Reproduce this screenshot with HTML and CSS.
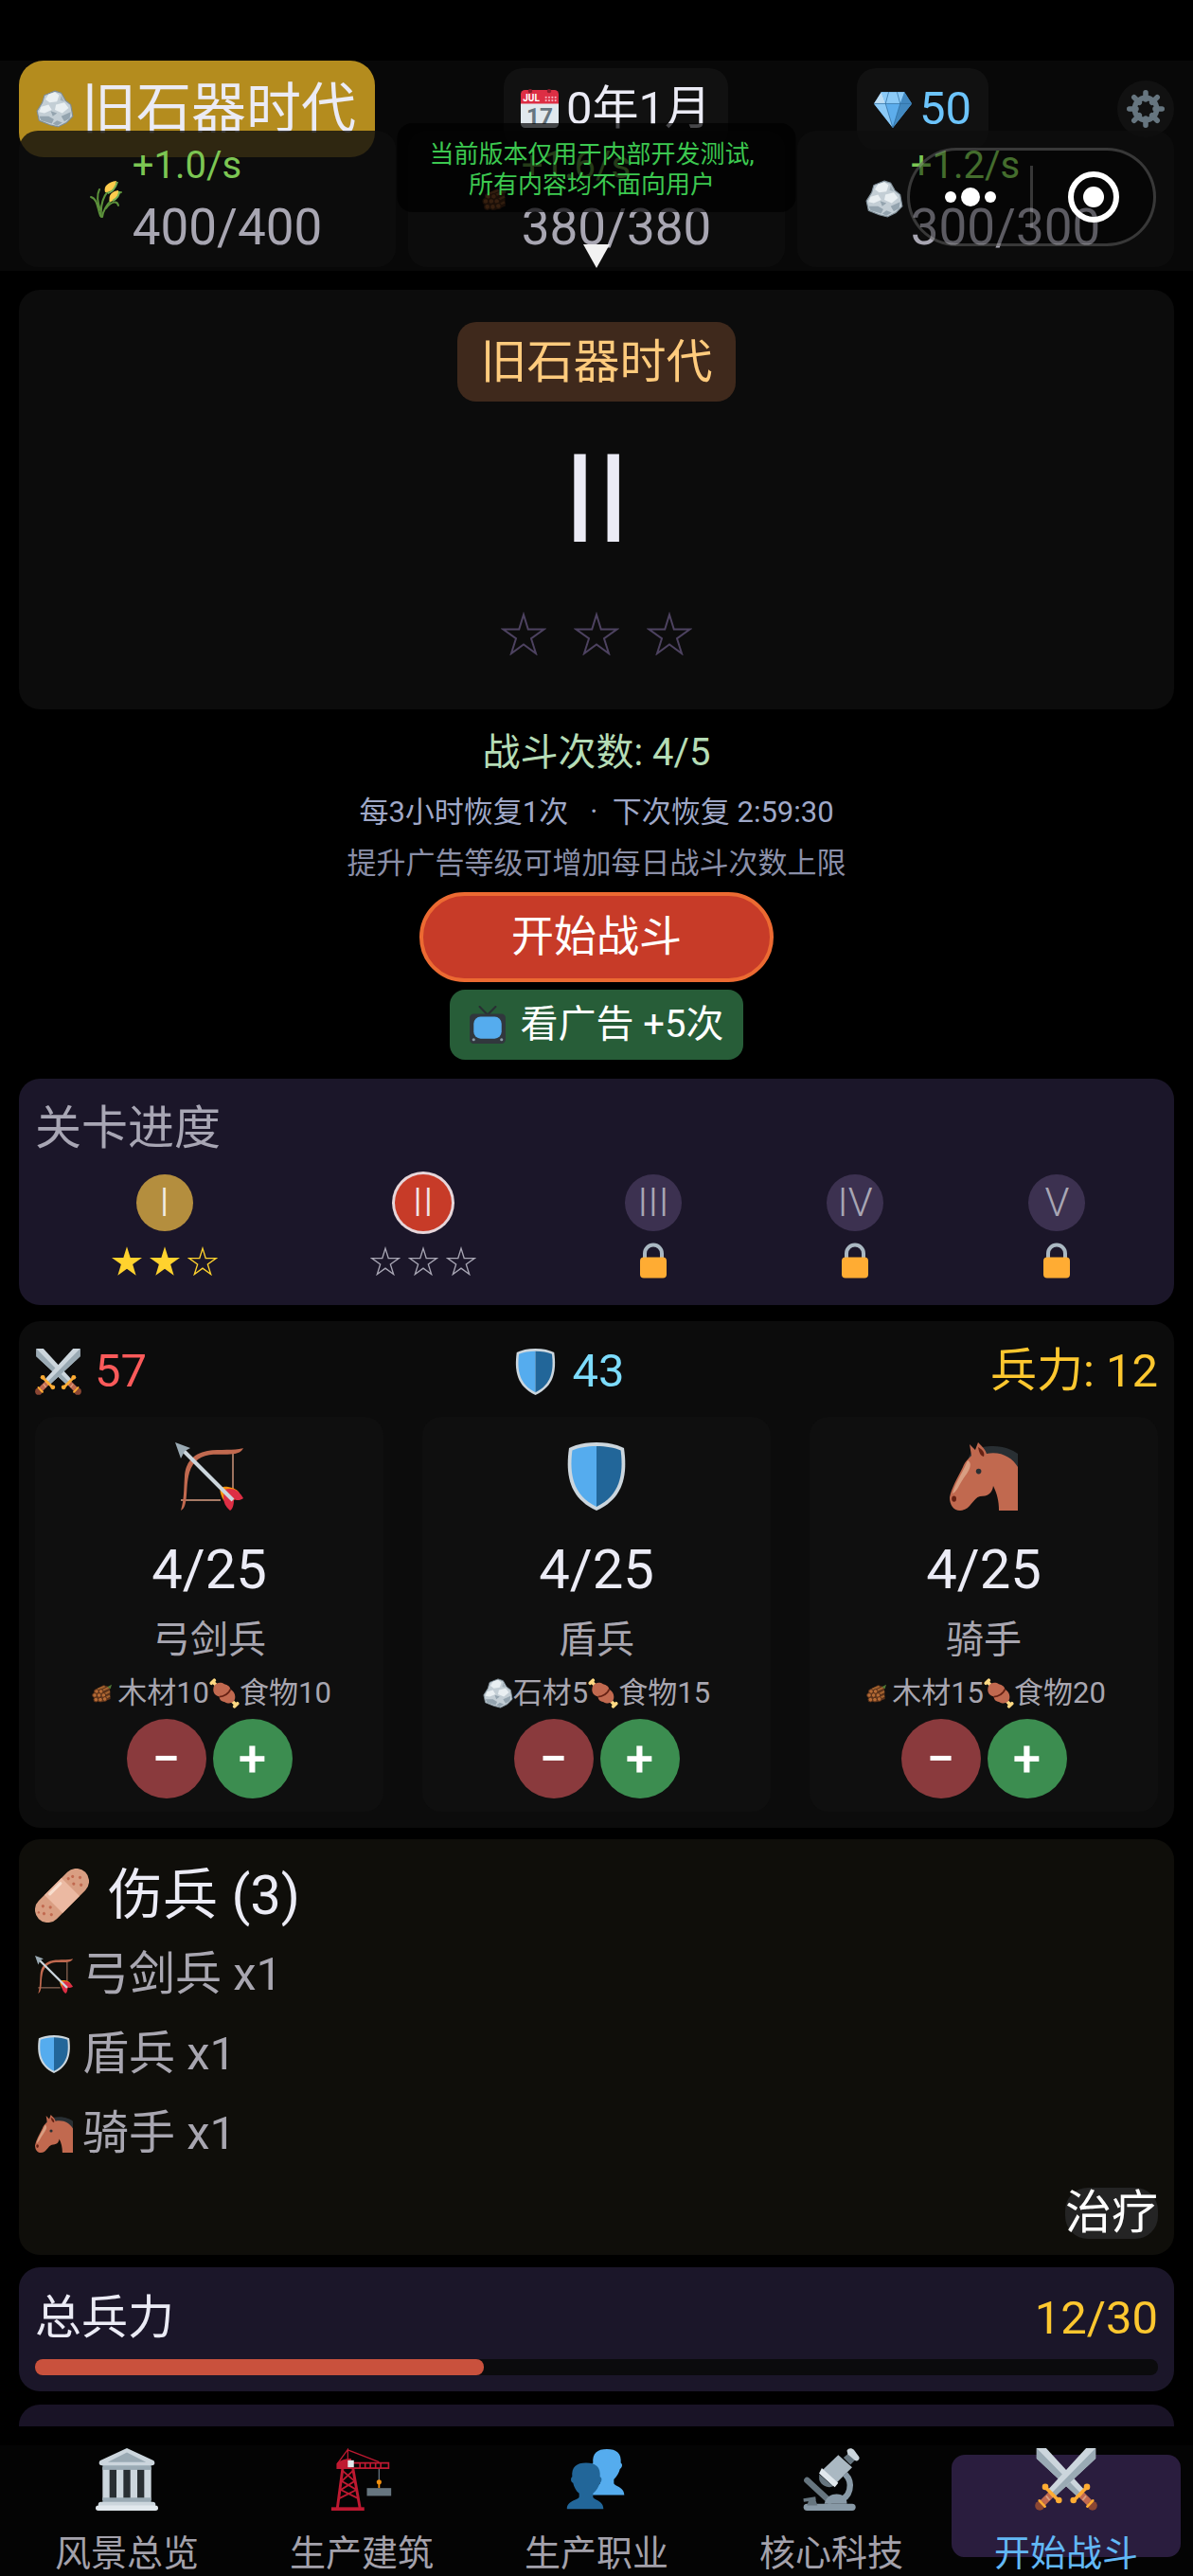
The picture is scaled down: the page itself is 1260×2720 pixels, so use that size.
FILE: index.html
```
<!DOCTYPE html>
<html lang="zh-CN">
<head>
    <meta charset="UTF-8">
    <meta name="viewport" content="width=device-width, initial-scale=1.0">
    <title>开始战斗</title>
    <link rel="stylesheet" href="styles.css">
</head>
<body>
    <!-- Icon set -->
    <svg class="sprite" aria-hidden="true">
        <symbol id="star-line" viewBox="0 0 48 46">
            <path d="M24 3 L28.8 18.6 H45.5 L32 28.2 L37 44 L24 34.4 L11 44 L16 28.2 L2.500 18.6 H19.2 Z" fill="none" stroke="currentColor" stroke-width="2"/>
        </symbol>
        <symbol id="star-full" viewBox="0 0 48 46">
            <path d="M24 0 L29.500 17.600 H48 L33.2 28.4 L38.500 46 L24 35.500 L9.500 46 L14.800 28.4 L0 17.600 H18.500 Z" fill="currentColor"/>
        </symbol>
        <symbol id="lock" viewBox="0 0 28 37">
            <path d="M5 17 V11 a9 9 0 0 1 18 0 V17" fill="none" stroke="#aab8c2" stroke-width="4"/>
            <rect x="0" y="15" width="28" height="22" rx="4" fill="#ffac33"/>
        </symbol>
        <symbol id="stone" viewBox="0 0 36 36">
            <path d="M18 1 L24 3 L28 10 L33 14 L35 25 L29 31 L21 35 L13 33 L3 29 L1 20 L6 12 L8 5 Z" fill="#c3ced5" stroke="#7e8d97" stroke-width="1"/>
            <path d="M12 4 L18 2 L22 5 L20 11 L13 12 L9 9 Z M5 16 L12 14 L15 19 L8 22 L3 21 Z M19 14 L27 12 L31 17 L25 22 L18 19 Z" fill="#e9eff2"/>
            <path d="M3 25 L12 25 L17 28 L15 32 L5 29 Z M24 25 L33 21 L32 27 L27 30 Z M20 29 L25 31 L20 34 L16 32 Z M14 20 L20 22 L16 25 Z" fill="#94a4af"/>
            <path d="M24 5 L27 11 L23 10 Z" fill="#a3b1ba"/>
        </symbol>
        <symbol id="diamond" viewBox="0 0 36 36">
            <path d="M7 2 H29 L36 13 L18 36 L0 13 Z" fill="#5dadec"/>
            <path d="M7 2 L11 13 H0 Z" fill="#bdddf4"/>
            <path d="M7 2 H14 L11 13 Z M29 2 H22 L25 13 Z" fill="#8ccaf7"/>
            <path d="M14 2 H22 L25 13 H11 Z" fill="#8ccaf7"/>
            <path d="M29 2 L36 13 H25 Z" fill="#4289c1"/>
            <path d="M0 13 H11 L18 36 Z" fill="#8ccaf7"/>
            <path d="M36 13 H25 L18 36 Z" fill="#4289c1"/>
            <path d="M0 13 H36 M14 2 L11 13 L18 36 L25 13 L22 2" fill="none" stroke="#2a6797" stroke-width="0.6"/>
        </symbol>
        <symbol id="gear" viewBox="0 0 36 36">
            <g stroke="#66757f" stroke-width="5" stroke-linecap="round">
                <path d="M18 2.500 V9 M18 27 V33.500 M2.500 18 H9 M27 18 H33.500 M7 7 L12 12 M24 24 L29 29 M29 7 L24 12 M12 24 L7 29"/>
            </g>
            <circle cx="18" cy="18" r="10.500" fill="none" stroke="#66757f" stroke-width="5"/>
        </symbol>
        <symbol id="wheat" viewBox="0 0 36 40">
            <g fill="none" stroke="#5c913b" stroke-width="2" stroke-linecap="round">
                <path d="M13 39 C12 28 14 19 20 12"/>
                <path d="M14 39 C15 32 18 27 24 21"/>
                <path d="M12 38 C9 30 9 20 2 18"/>
                <path d="M12 32 C9 24 8 16 11 10"/>
                <path d="M18 30 C24 22 30 22 31 27"/>
                <path d="M22 22 C26 15 30 14 34 13"/>
            </g>
            <path d="M17 13 C15 7 20 2 29 1 C28 8 25 13 17 13 Z" fill="#ffcc4d"/>
            <path d="M22 23 C20 16 24 12 31 11 C32 17 28 22 22 23 Z" fill="#ffcc4d"/>
            <path d="M20 14 C24 13 28 8 30 2 M25 22 C29 20 32 16 32 12" fill="none" stroke="#77b255" stroke-width="2"/>
        </symbol>
        <symbol id="wood" viewBox="0 0 36 36">
            <path d="M5 13 L20 5 L30 8 L31 27 L18 32 L6 30 Z" fill="#5b321a"/>
            <path d="M10 12 L22 7 M17 14 L28 9 M20 20 L30 15 M20 27 L30 22" stroke="#a2622f" stroke-width="3"/>
            <g fill="#b46a35" stroke="#5b321a" stroke-width="1.500">
                <circle cx="9" cy="15" r="3.500"/><circle cx="16" cy="15" r="3.500"/>
                <circle cx="6" cy="21" r="3.500"/><circle cx="13" cy="21" r="3.500"/><circle cx="20" cy="21" r="3.500"/>
                <circle cx="8" cy="28" r="3.500"/><circle cx="15" cy="28" r="3.500"/><circle cx="22" cy="27" r="3.500"/>
            </g>
            <path d="M26 8 L33 4 L31 11 Z" fill="#4f7a35"/>
        </symbol>
        <symbol id="tv" viewBox="0 0 36 38">
            <path d="M10 1 L18 9 L26 1" fill="none" stroke="#292f33" stroke-width="2" stroke-linecap="round"/>
            <rect x="0" y="8" width="36" height="30" rx="4" fill="#31373d"/>
            <rect x="4" y="11" width="28" height="22" rx="7" fill="#55acee"/>
            <circle cx="4" cy="34" r="1.500" fill="#8899a6"/>
            <circle cx="32" cy="34" r="1.500" fill="#8899a6"/>
        </symbol>
        <symbol id="sword" viewBox="0 0 36 36">
            <path d="M35 0 H29.500 L7.500 24 L11.500 28 L35 6 Z" fill="#ccd6dd"/>
            <path d="M35 0 L9.500 26 L11.500 28 L35 6 Z" fill="#9aaab4"/>
            <path d="M9.500 26.500 L3.500 32.500" stroke="#c1694f" stroke-width="4"/>
            <path d="M8.500 25.500 L10.500 28 M6.500 27.500 L8.500 30" stroke="#d99e82" stroke-width="1"/>
            <circle cx="2.800" cy="33.200" r="2.700" fill="#8a4633"/>
            <path d="M2.600 30.200 L5.800 33.600" stroke="#ffac33" stroke-width="1.500" stroke-linecap="round"/>
            <path d="M6 22.500 L13.500 30" stroke="#ffac33" stroke-width="2"/>
            <circle cx="6" cy="22.300" r="1.800" fill="#ffac33"/>
            <circle cx="13.800" cy="30" r="1.800" fill="#ffac33"/>
        </symbol>
        <symbol id="swords" viewBox="0 0 36 36">
            <use href="#sword" width="36" height="36" transform="matrix(-1 0 0 1 36 0)"/>
            <use href="#sword" width="36" height="36"/>
        </symbol>
        <symbol id="shield" viewBox="0 0 36 36">
            <path d="M18 0 C12 0 7 1.200 3.500 3 C1.500 17 3.500 29.500 18 36 C32.500 29.500 34.500 17 32.500 3 C29 1.200 24 0 18 0 Z" fill="#ccd6dd"/>
            <path d="M18 2 C13 2 8.500 2.800 5.200 4.300 C3.600 17 5.600 28 18 34 Z" fill="#55acee"/>
            <path d="M18 2 C23 2 27.500 2.800 30.800 4.300 C32.400 17 30.400 28 18 34 Z" fill="#269"/>
        </symbol>
        <symbol id="bow" viewBox="0 0 36 36">
            <path d="M30.500 4 V25 M3 30.500 H24" stroke="#d99e82" stroke-width="0.700"/>
            <path d="M36 3 C32 4.500 24 3.500 17 4.500 C9 6 5.500 11 5 18 C4.500 25 4.800 30 3 36 C7 34 5.500 25 7 18 C8.200 11.500 12 7.500 18 6.600 C24 5.700 34 8 36 3 Z" fill="#c1694f"/>
            <path d="M24 27 C23 24 25 23 28 23.500 C31 24 33 25 34 27 L29 33 C26 32 25 30 24 27 Z" fill="#f4900c"/>
            <path d="M26 25 C31 23.500 34 26 36 29.500 C34 31 32 30.500 31 30 C31 33 30.500 35 29 36 C25.500 33 25 30 26 25 Z" fill="#dd2e44"/>
            <path d="M4 4 L30.500 30.500" stroke="#ccd6dd" stroke-width="2"/>
            <path d="M0 0 L8 3 L5 4.600 L3 8.500 Z" fill="#9aaab4"/>
        </symbol>
        <symbol id="horse" viewBox="0 0 36 36">
            <path d="M10 9 C10 5 15 2 23 2 C29 2 33 4 36 6 V14 H24 Z" fill="#292f33"/>
            <path d="M10.500 1 L13.500 4 L15 0 C17 2 19 4 19.500 6 C27 4.500 33 8 36 13 V36 H26 C26 31 25 27 23 23 C22.500 27 20 28.500 16 28.500 C12 29.500 11 36 5.500 36 C2 36 0 33 0 29 C1 24 4 19 7 13 C8 10.500 9 9.500 11.500 7 Z" fill="#c1694f"/>
            <path d="M15 2.500 C18 4 18.500 6 18 7.500 C16 7 15.500 5 15 2.500 Z" fill="#662113"/>
            <path d="M9.500 9.500 C12 11 11 14 8 18 C5 22 4 26 1.500 27 C3 21 7 16 9.500 9.500 Z" fill="#d99e82"/>
            <circle cx="15.300" cy="15.300" r="1.400" fill="#292f33"/>
            <ellipse cx="2.300" cy="29.800" rx="1.200" ry="1.600" fill="#662113"/>
        </symbol>
        <symbol id="meat" viewBox="0 0 36 36">
            <g stroke="#ffd983" stroke-width="4" stroke-linecap="round">
                <path d="M5 5 L31 31"/>
                <path d="M2.500 6 L6 2.500 M30 33.500 L33.500 30"/>
            </g>
            <path d="M5 12 C5 7 12 3 18 7 C22 8 25 10 25 13 C30 16 32 21 30 26 C28 30 23 31 18 28 C14 28 12 25 12 22 C7 21 4 17 5 12 Z" fill="#c1694f"/>
            <path d="M12 22 C17 22 24 18 25 13" fill="none" stroke="#662113" stroke-width="2"/>
        </symbol>
        <symbol id="bandage" viewBox="0 0 36 36">
            <g transform="rotate(-45 18 18)">
                <rect x="-4" y="9.500" width="44" height="17" rx="8.500" fill="#d99e82"/>
                <rect x="10" y="9.500" width="16" height="17" fill="#ebb9a2"/>
                <rect x="12" y="10.500" width="12" height="2" rx="1" fill="#f7dece"/>
                <g fill="#c1694f">
                    <circle cx="1" cy="18" r="1"/><circle cx="4" cy="14" r="1"/><circle cx="4" cy="22" r="1"/><circle cx="7" cy="18" r="1"/><circle cx="-1" cy="15" r="0.800"/>
                    <circle cx="29" cy="18" r="1"/><circle cx="32" cy="14" r="1"/><circle cx="32" cy="22" r="1"/><circle cx="35" cy="18" r="1"/><circle cx="29" cy="13" r="1"/>
                </g>
            </g>
        </symbol>
        <symbol id="temple" viewBox="0 0 36 36">
            <rect x="5" y="10" width="26" height="22" fill="#292f33"/>
            <g fill="#ccd6dd">
                <rect x="4" y="11" width="4" height="19"/><rect x="12" y="11" width="4" height="19"/>
                <rect x="20" y="11" width="4" height="19"/><rect x="28" y="11" width="4" height="19"/>
            </g>
            <rect x="4" y="9" width="28" height="3.500" fill="#9aaab4"/>
            <rect x="4" y="28.500" width="28" height="3.500" fill="#9aaab4"/>
            <path d="M18 0 L33 7 a1.500 1.500 0 0 1 1 1.500 a1.500 1.500 0 0 1 -1.500 1.500 H3.500 a1.500 1.500 0 0 1 -1.500 -1.500 a1.500 1.500 0 0 1 1 -1.500 Z" fill="#ccd6dd"/>
            <path d="M18 2.500 L29 8 H7 Z" fill="#9aaab4"/>
            <rect x="1.500" y="31" width="33" height="3" rx="1.500" fill="#ccd6dd"/>
            <rect x="0" y="33" width="36" height="3" rx="1.500" fill="#e1e8ed"/>
        </symbol>
        <symbol id="crane" viewBox="0 0 36 36">
            <g fill="none" stroke="#be1931">
                <path d="M10 11 V0.800 L4 9 M10 1 L28 8" stroke-width="0.700"/>
                <path d="M7 12 L4 34.500 M13 12 L17 34.500" stroke-width="1.600"/>
                <path d="M7 13 L14 19 L6 24 L16 29 M13 13 L6.500 19 L15 24 L5 29" stroke-width="1"/>
                <path d="M12 8.500 H33.500 V11.500 H12 M17 8 V12 M20 8 V12 M23 8 V12 M26 8 V12 M29 8 V12" stroke-width="0.900"/>
            </g>
            <rect x="0.500" y="34" width="19" height="2" fill="#be1931"/>
            <path d="M3.500 9 C5 7 9 6 12 6 V12 H3.500 Z" fill="#be1931"/>
            <rect x="10" y="7" width="3.500" height="4" fill="#e1e8ed"/>
            <path d="M28 12 V18.500" stroke="#66757f" stroke-width="0.700"/>
            <circle cx="28" cy="19.500" r="1.400" fill="#f4900c"/>
            <rect x="27.500" y="20" width="1" height="3" fill="#f4900c"/>
            <rect x="21" y="23" width="14" height="4.500" fill="#66757f"/>
        </symbol>
        <symbol id="people" viewBox="0 0 36 36">
            <path d="M14 27 C14 22 20 22 20 20 V18 C18 16 17 14 16.500 11.500 C15.500 11 15 9.500 16 8.500 C15.500 3 18.500 0.500 24 0.500 C29.500 0.500 32.500 3 32 8.500 C33.500 9.500 32.500 11.500 31.500 12 C31 14 30 16 28 18 V20 C28 22 34 22 34 27 Z" fill="#55acee"/>
            <path d="M1 35 C1 30 8 30 8 28 V26 C6 24.500 5 22 4.500 20 C3 19.500 3 17 4 16.500 C3.500 11 6.500 8.500 12 8.500 C17.500 8.500 20.500 11 20 16.500 C21.500 17 21 19.500 20 20 C19 22.500 18 24.500 16 26 V28 C16 30 22 30 22 35 Z" fill="#269"/>
        </symbol>
        <symbol id="microscope" viewBox="0 0 36 36">
            <path d="M4 18.500 L17 30.500" stroke="#66757f" stroke-width="3.500" stroke-linecap="round"/>
            <path d="M26 15 C31 20 29 29 22 30" fill="none" stroke="#8899a6" stroke-width="3.500"/>
            <path d="M2 30 L9 29" stroke="#66757f" stroke-width="2"/>
            <rect x="2" y="32" width="30" height="4" rx="2" fill="#8899a6"/>
            <path d="M14 32 C15 28 18 26.500 21 26.500 C25 26.500 27 29 27 32 Z" fill="#8899a6"/>
            <path d="M5 30 H9 L10 33 H4 Z" fill="#66757f"/>
            <path d="M22 4 L30 11 L19 22 L11 14.500 Z" fill="#aab8c2"/>
            <path d="M12.500 11.500 L22 20 L20 22.500 L11 14.500 Z" fill="#e1e8ed"/>
            <path d="M11 15 L19 22 C16 23.500 11.500 21 11 18 Z" fill="#66757f"/>
            <path d="M25 5.500 L28 3 L32 6.500 L29 9.500 Z" fill="#66757f"/>
            <path d="M27 1.500 C28 -0.500 30 0 31 1 L34 5 C34.500 6.500 33 8 31.500 7 L27.500 3.500 Z" fill="#ccd6dd"/>
        </symbol>
    </svg>

    <!-- Header -->
    <header class="header">
        <div class="topbar">
            <div class="pill pill-era"><svg class="icon"><use href="#stone"/></svg>旧石器时代</div>
            <div class="pill">
                <svg class="icon calendar" viewBox="0 0 36 36">
                    <path d="M0 11 H36 V32 a4 4 0 0 1 -4 4 H4 a4 4 0 0 1 -4 -4 Z" fill="#e1e8ed"/>
                    <path d="M0 4 a4 4 0 0 1 4 -4 H32 a4 4 0 0 1 4 4 V13 H0 Z" fill="#dd2e44"/>
                    <circle cx="9" cy="1" r="2" fill="#8a1c2c"/>
                    <circle cx="27" cy="1" r="2" fill="#8a1c2c"/>
                    <g fill="#f4abba">
                        <circle cx="24" cy="7" r="1"/><circle cx="27" cy="7" r="1"/><circle cx="30" cy="7" r="1"/><circle cx="33" cy="7" r="1"/>
                        <circle cx="24" cy="10" r="1"/><circle cx="27" cy="10" r="1"/><circle cx="30" cy="10" r="1"/><circle cx="33" cy="10" r="1"/>
                    </g>
                    <text x="2" y="11" class="cal-month">JUL</text>
                    <text x="18" y="32" class="cal-day">17</text>
                </svg>
                0年1月
            </div>
            <div class="pill pill-gem"><svg class="icon"><use href="#diamond"/></svg>50</div>
            <button class="settings" aria-label="设置"><svg class="icon"><use href="#gear"/></svg></button>
        </div>
        <div class="resources">
            <div class="resource">
                <svg class="icon"><use href="#wheat"/></svg>
                <div>
                    <div class="rate">+1.0/s</div>
                    <div class="amount">400/400</div>
                </div>
            </div>
            <div class="resource">
                <svg class="icon icon-small"><use href="#wood"/></svg>
                <div>
                    <div class="rate">+1.6/s</div>
                    <div class="amount">380/380</div>
                </div>
            </div>
            <div class="resource">
                <svg class="icon"><use href="#stone"/></svg>
                <div>
                    <div class="rate">+1.2/s</div>
                    <div class="amount">300/300</div>
                </div>
            </div>
        </div>

        <!-- Floating layers -->
        <div class="notice">当前版本仅用于内部开发测试,<br>所有内容均不面向用户</div>
        <div class="expand"></div>
        <div class="capsule">
            <button class="capsule-btn" aria-label="更多">
                <svg width="56" height="20" viewBox="0 0 56 20"><circle cx="7" cy="10" r="6"/><circle cx="28" cy="10" r="10"/><circle cx="49" cy="10" r="6"/></svg>
            </button>
            <button class="capsule-btn" aria-label="关闭">
                <svg width="54" height="54" viewBox="0 0 54 54"><circle cx="27" cy="27" r="24" fill="none" stroke="#fff" stroke-width="6"/><circle cx="27" cy="27" r="11"/></svg>
            </button>
        </div>
    </header>

    <!-- Main Content -->
    <main class="content">
        <section class="card stage">
            <div class="stage-era">旧石器时代</div>
            <div class="stage-level">II</div>
            <div class="stage-stars">
                <svg><use href="#star-line"/></svg>
                <svg><use href="#star-line"/></svg>
                <svg><use href="#star-line"/></svg>
            </div>
        </section>

        <section class="battle">
            <div class="battle-count">战斗次数: 4/5</div>
            <div class="battle-tip">每3小时恢复1次 &nbsp;&nbsp;·&nbsp; 下次恢复 2:59:30</div>
            <div class="battle-tip battle-tip-dim">提升广告等级可增加每日战斗次数上限</div>
            <button class="start-btn">开始战斗</button>
            <button class="ad-btn"><svg class="icon"><use href="#tv"/></svg>看广告 +5次</button>
        </section>

        <section class="card card-purple progress">
            <h2 class="progress-title">关卡进度</h2>
            <div class="levels">
                <div class="level level-done">
                    <span class="level-badge">I</span>
                    <div class="level-stars">
                        <svg><use href="#star-full"/></svg>
                        <svg><use href="#star-full"/></svg>
                        <svg><use href="#star-line"/></svg>
                    </div>
                </div>
                <div class="level level-now">
                    <span class="level-badge">II</span>
                    <div class="level-stars">
                        <svg><use href="#star-line"/></svg>
                        <svg><use href="#star-line"/></svg>
                        <svg><use href="#star-line"/></svg>
                    </div>
                </div>
                <div class="level">
                    <span class="level-badge">III</span>
                    <svg class="lock"><use href="#lock"/></svg>
                </div>
                <div class="level">
                    <span class="level-badge">IV</span>
                    <svg class="lock"><use href="#lock"/></svg>
                </div>
                <div class="level">
                    <span class="level-badge">V</span>
                    <svg class="lock"><use href="#lock"/></svg>
                </div>
            </div>
        </section>

        <section class="card army">
            <div class="army-stats">
                <div class="stat stat-attack"><svg><use href="#swords"/></svg>57</div>
                <div class="stat stat-defence"><svg><use href="#shield"/></svg>43</div>
                <div class="stat stat-troops">兵力: 12</div>
            </div>
            <div class="units">
                <div class="unit">
                    <svg class="unit-icon"><use href="#bow"/></svg>
                    <div class="unit-count">4/25</div>
                    <div class="unit-name">弓剑兵</div>
                    <div class="unit-cost"><svg class="cost-wood"><use href="#wood"/></svg>木材10<svg><use href="#meat"/></svg>食物10</div>
                    <div class="unit-actions">
                        <button class="round-btn minus" aria-label="减少弓剑兵">−</button>
                        <button class="round-btn plus" aria-label="增加弓剑兵">+</button>
                    </div>
                </div>
                <div class="unit">
                    <svg class="unit-icon"><use href="#shield"/></svg>
                    <div class="unit-count">4/25</div>
                    <div class="unit-name">盾兵</div>
                    <div class="unit-cost"><svg><use href="#stone"/></svg>石材5<svg><use href="#meat"/></svg>食物15</div>
                    <div class="unit-actions">
                        <button class="round-btn minus" aria-label="减少盾兵">−</button>
                        <button class="round-btn plus" aria-label="增加盾兵">+</button>
                    </div>
                </div>
                <div class="unit">
                    <svg class="unit-icon"><use href="#horse"/></svg>
                    <div class="unit-count">4/25</div>
                    <div class="unit-name">骑手</div>
                    <div class="unit-cost"><svg class="cost-wood"><use href="#wood"/></svg>木材15<svg><use href="#meat"/></svg>食物20</div>
                    <div class="unit-actions">
                        <button class="round-btn minus" aria-label="减少骑手">−</button>
                        <button class="round-btn plus" aria-label="增加骑手">+</button>
                    </div>
                </div>
            </div>
        </section>

        <section class="card wounded">
            <h2 class="wounded-title"><svg><use href="#bandage"/></svg>伤兵 (3)</h2>
            <ul class="wounded-list">
                <li><svg class="icon"><use href="#bow"/></svg>弓剑兵 x1</li>
                <li><svg class="icon"><use href="#shield"/></svg>盾兵 x1</li>
                <li><svg class="icon"><use href="#horse"/></svg>骑手 x1</li>
            </ul>
            <button class="heal-btn">治疗</button>
        </section>

        <section class="card card-purple total">
            <div class="total-row">
                <span>总兵力</span>
                <span class="total-value">12/30</span>
            </div>
            <div class="bar">
                <div class="bar-fill" style="width: 40%;"></div>
            </div>
        </section>

        <section class="card card-purple more"></section>
    </main>

    <!-- Bottom Navigation -->
    <nav class="nav">
        <a href="#scenery"><svg><use href="#temple"/></svg><span>风景总览</span></a>
        <a href="#buildings"><svg><use href="#crane"/></svg><span>生产建筑</span></a>
        <a href="#jobs"><svg><use href="#people"/></svg><span>生产职业</span></a>
        <a href="#tech"><svg><use href="#microscope"/></svg><span>核心科技</span></a>
        <a href="#battle" class="active-link"><svg><use href="#swords"/></svg><span>开始战斗</span></a>
    </nav>
</body>
</html>
```

FILE: styles.css
```
/* Global Styles */
* {
    box-sizing: border-box;
}

body {
    margin: 0;
    height: 100vh;
    padding-top: 64px;
    display: flex;
    flex-direction: column;
    overflow: hidden;
    background: #000;
    color: #ebebf5;
    font-family: Roboto, "Noto Sans CJK SC", sans-serif;
    font-size: 49px;
}

h2, ul {
    margin: 0;
    padding: 0;
    font-weight: 400;
    list-style: none;
}

button {
    padding: 0;
    border: none;
    font-family: inherit;
    color: #fff;
    cursor: pointer;
}

svg {
    display: block;
    flex: none;
}

.sprite {
    position: absolute;
    width: 0;
    height: 0;
}

.icon {
    width: 40px;
    height: 40px;
}

.icon-small {
    padding: 5px;
}

.calendar {
    overflow: visible;
}

.cal-month {
    font-size: 9px;
    font-weight: 700;
    line-height: 9px;
    fill: #fff;
}

.cal-day {
    font-size: 22px;
    font-weight: 700;
    line-height: 22px;
    fill: #66757f;
    text-anchor: middle;
}

/* Header */
.header {
    position: relative;
    flex: none;
    padding: 0 20px 4px;
    background: #080808;
}

.topbar {
    display: flex;
    align-items: center;
    justify-content: space-between;
    height: 102px;
    line-height: 60px;
}

.pill {
    display: flex;
    align-items: center;
    gap: 8px;
    height: 86px;
    padding: 0 18px;
    border-radius: 20px;
    background: #111;
}

.pill-era {
    height: 102px;
    padding: 0 20px 0 18px;
    border-radius: 26px;
    background: #b48c1e;
    font-size: 58px;
}

.pill-gem {
    color: #6cc4fb;
}

.settings {
    display: flex;
    align-items: center;
    justify-content: center;
    width: 60px;
    height: 60px;
    border-radius: 50%;
    background: #111;
}

.resources {
    position: relative;
    display: grid;
    grid-template-columns: repeat(3, 1fr);
    gap: 13px;
    margin-top: -28px;
}

.resource {
    display: flex;
    align-items: center;
    justify-content: center;
    gap: 8px;
    padding: 7px 6px 7px 0;
    border-radius: 20px;
    background: rgba(14, 14, 14, 0.8);
}

.rate {
    font-size: 40px;
    line-height: 60px;
    color: #7cc653;
}

.amount {
    font-size: 53px;
    line-height: 70px;
    color: #a8a6b2;
}

.notice {
    position: absolute;
    top: 66px;
    left: 50%;
    transform: translateX(-50%);
    padding: 17px 44px 13px 34px;
    border-radius: 16px;
    background: rgba(0, 0, 0, 0.7);
    color: #3cc850;
    font-size: 26px;
    line-height: 32px;
    text-align: center;
    white-space: nowrap;
}

.expand {
    position: absolute;
    top: 194px;
    left: 50%;
    margin-left: -14px;
    border: 14px solid transparent;
    border-top: 25px solid #f2f2f2;
    border-bottom: none;
}

.capsule {
    position: absolute;
    top: 92px;
    right: 39px;
    display: flex;
    align-items: center;
    width: 263px;
    height: 104px;
    border: 3px solid rgba(255, 255, 255, 0.2);
    border-radius: 52px;
    background: rgba(0, 0, 0, 0.45);
}

.capsule-btn {
    flex: 1;
    display: flex;
    align-items: center;
    justify-content: center;
    height: 66px;
    background: none;
    fill: #fff;
}

.capsule-btn + .capsule-btn {
    border-left: 3px solid rgba(255, 255, 255, 0.2);
}

/* Main Content */
.content {
    flex: 1;
    min-height: 0;
    overflow: hidden;
    margin-bottom: 20px;
    padding: 20px 20px 0;
}

.card {
    padding: 17px;
    border-radius: 22px;
    background: #0c0c0c;
}

.card-purple {
    background: #1b1629;
}

/* Stage */
.stage {
    display: flex;
    flex-direction: column;
    align-items: center;
    padding: 34px 17px 57px;
}

.stage-era {
    padding: 2px 24px 0;
    border-radius: 20px;
    background: #3f291c;
    color: #ffcb7d;
    line-height: 82px;
}

.stage-level {
    margin-top: 29px;
    font-size: 130px;
    line-height: 150px;
}

.stage-stars {
    display: flex;
    gap: 29px;
    margin-top: 43px;
    color: #4d4260;
}

.stage-stars svg {
    width: 48px;
    height: 46px;
}

/* Battle */
.battle {
    display: flex;
    flex-direction: column;
    align-items: center;
    margin-top: 16px;
}

.battle-count {
    margin-bottom: 6px;
    color: #b5dcb6;
    font-size: 40px;
    line-height: 60px;
}

.battle-tip {
    color: #9fa8c8;
    font-size: 31px;
    line-height: 54px;
}

.battle-tip-dim {
    color: #8a8fa8;
}

.start-btn {
    width: 374px;
    height: 95px;
    margin-top: 3px;
    border: 4px solid #ec6a32;
    border-radius: 48px;
    background: #c73b28;
    font-size: 45px;
    line-height: 60px;
}

.ad-btn {
    display: flex;
    align-items: center;
    gap: 14px;
    height: 74px;
    margin-top: 8px;
    padding: 0 20px;
    border-radius: 16px;
    background: #275d38;
    font-size: 40px;
    line-height: 60px;
}

/* Level progress */
.progress {
    margin-top: 20px;
    padding: 19px 17px 27px;
}

.progress-title {
    color: #a8a6b4;
    font-size: 49px;
    line-height: 68px;
}

.levels {
    display: flex;
    justify-content: space-around;
    margin-top: 14px;
}

.level {
    display: flex;
    flex-direction: column;
    align-items: center;
    gap: 11px;
    color: #a8a6b4;
}

.level-badge {
    width: 60px;
    height: 60px;
    border-radius: 50%;
    background: #3c3150;
    font-size: 42px;
    font-weight: 300;
    line-height: 60px;
    text-align: center;
}

.level-done .level-badge {
    background: #b48e3e;
    color: #f2ece4;
}

.level-now .level-badge {
    background: #c73b28;
    box-shadow: 0 0 0 3px #e6d6da;
    color: #f2e4e6;
}

.level-done {
    color: #ffd22e;
}

.level-stars {
    display: flex;
    align-items: center;
    height: 40px;
}

.level-stars svg {
    width: 32px;
    height: 31px;
    margin: 0 4px;
}

.lock {
    width: 28px;
    height: 40px;
}

/* Army */
.army {
    margin-top: 17px;
}

.army-stats {
    display: flex;
    justify-content: space-between;
    line-height: 72px;
}

.stat {
    display: flex;
    align-items: center;
    gap: 14px;
}

.stat svg {
    width: 49px;
    height: 49px;
}

.stat-attack {
    color: #fb5a5a;
}

.stat-defence {
    color: #7ddcfd;
}

.stat-troops {
    color: #fdc72f;
}

.units {
    display: grid;
    grid-template-columns: repeat(3, 1fr);
    gap: 41px;
    margin-top: 12px;
}

.unit {
    display: flex;
    flex-direction: column;
    align-items: center;
    padding: 27px 0 14px;
    border-radius: 20px;
    background: #0f0f0f;
}

.unit-icon {
    width: 72px;
    height: 72px;
}

.unit-count {
    margin-top: 22px;
    font-size: 58px;
    line-height: 80px;
}

.unit-name {
    margin-top: 10px;
    color: #a8a6b0;
    font-size: 40px;
    line-height: 50px;
}

.unit-cost {
    display: flex;
    align-items: center;
    margin-top: 9px;
    color: #a8a6b0;
    font-size: 31px;
    line-height: 44px;
}

.unit-cost svg {
    width: 32px;
    height: 32px;
}

.unit-cost .cost-wood {
    padding: 4px;
}

.unit-actions {
    display: flex;
    gap: 7px;
    margin-top: 5px;
}

.round-btn {
    width: 84px;
    height: 84px;
    border-radius: 50%;
    font-size: 53px;
    font-weight: 500;
    line-height: 84px;
}

.minus {
    background: #8a3a3d;
}

.plus {
    background: #3c8d50;
}

/* Wounded */
.wounded {
    display: flex;
    flex-direction: column;
    margin-top: 12px;
    background: #0f0e0a;
}

.wounded-title {
    display: flex;
    align-items: center;
    gap: 20px;
    font-size: 58px;
    line-height: 84px;
}

.wounded-title svg {
    width: 57px;
    height: 57px;
}

.wounded-list li {
    display: flex;
    align-items: center;
    gap: 10px;
    color: #a8a6b0;
    line-height: 84px;
}

.heal-btn {
    align-self: flex-end;
    margin-top: 15px;
    border-radius: 24px;
    background: #242424;
    font-size: 49px;
    line-height: 54px;
}

/* Total */
.total {
    margin-top: 13px;
}

.total-row {
    display: flex;
    justify-content: space-between;
    line-height: 74px;
}

.total-value {
    color: #fdc72f;
}

.bar {
    height: 17px;
    margin-top: 6px;
    border-radius: 8px;
    background: #0b0b0d;
}

.bar-fill {
    height: 100%;
    border-radius: 8px;
    background: #c9513d;
}

.more {
    height: 240px;
    margin-top: 14px;
    background: #191326;
}

/* Bottom Navigation */
.nav {
    display: flex;
    flex: none;
    padding: 10px 10px 20px;
    background: #040404;
}

.nav a {
    flex: 1;
    display: flex;
    flex-direction: column;
    align-items: center;
    justify-content: center;
    gap: 27px;
    height: 108px;
    margin: 0 3px;
    padding-top: 6px;
    border-radius: 14px;
    color: #a3a1ab;
    font-size: 38px;
    line-height: 36px;
    text-decoration: none;
}

.nav svg {
    width: 66px;
    height: 66px;
}

.nav .active-link {
    background: #2a1d3e;
    color: #62b8f5;
}
```
